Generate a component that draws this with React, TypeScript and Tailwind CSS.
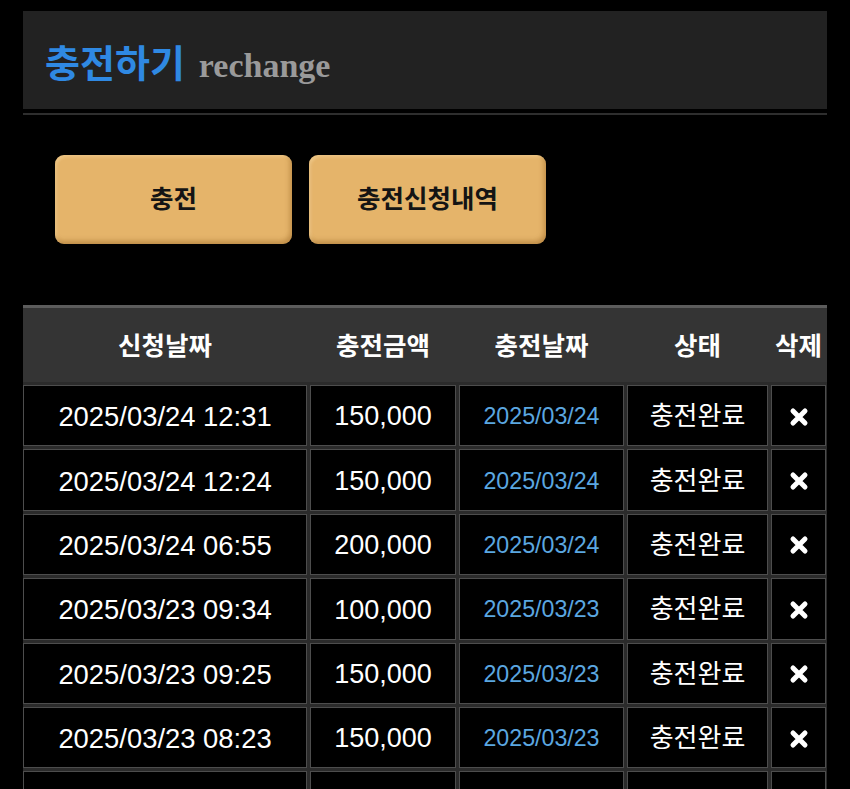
import React from 'react';

interface Recharge {
  requestedAt: string;
  amount: string;
  chargedOn: string;
  status: string;
}

const rows: Recharge[] = [
  { requestedAt: '2025/03/24 12:31', amount: '150,000', chargedOn: '2025/03/24', status: '충전완료' },
  { requestedAt: '2025/03/24 12:24', amount: '150,000', chargedOn: '2025/03/24', status: '충전완료' },
  { requestedAt: '2025/03/24 06:55', amount: '200,000', chargedOn: '2025/03/24', status: '충전완료' },
  { requestedAt: '2025/03/23 09:34', amount: '100,000', chargedOn: '2025/03/23', status: '충전완료' },
  { requestedAt: '2025/03/23 09:25', amount: '150,000', chargedOn: '2025/03/23', status: '충전완료' },
  { requestedAt: '2025/03/23 08:23', amount: '150,000', chargedOn: '2025/03/23', status: '충전완료' },
  { requestedAt: '2025/03/22 21:10', amount: '100,000', chargedOn: '2025/03/22', status: '충전완료' },
];

const font = "font-['Liberation_Sans','Noto_Sans_CJK_KR',sans-serif]";
const cols = 'grid grid-cols-[284px_146px_165px_141px_55px] gap-x-[3px]';

function DeleteIcon() {
  return (
    <svg width="20" height="20" viewBox="0 0 20 20" aria-hidden>
      <path d="M4 4 L16 16 M16 4 L4 16" stroke="#fff" strokeWidth="5" strokeLinecap="round" />
    </svg>
  );
}

function Cell({ children, className = '' }: { children: React.ReactNode; className?: string }) {
  return (
    <div className={`flex h-[61.4px] items-center justify-center border border-[#4d4d4d] bg-black pt-[2px] ${className}`}>
      {children}
    </div>
  );
}

export default function App() {
  return (
    <div className={`min-h-screen bg-black pt-[11px] ${font}`}>
      <div className="mx-[23px]">
        <div className="flex h-[98px] items-center bg-[#222222] pl-[22px] pt-[8px]">
          <h1 className="text-[38px] font-bold leading-none text-[#2f89e3]">충전하기</h1>
          <span className="ml-[14px] mt-[4px] font-['Liberation_Serif',serif] text-[34px] font-bold leading-none text-[#9a9a9a]">
            rechange
          </span>
        </div>
        <div className="mt-[4px] h-[2px] bg-[#2e2e2e]" />

        <div className="mt-[40px] flex gap-[17px] pl-[32px]">
          {['충전', '충전신청내역'].map((label) => (
            <button
              key={label}
              className="h-[89px] w-[237px] rounded-[9px] bg-[#e5b46a] text-[25.5px] font-bold text-[#141414] shadow-[inset_-2px_-3px_5px_rgba(120,70,10,0.35),inset_2px_2px_3px_rgba(255,230,180,0.4),0_2px_3px_rgba(0,0,0,0.6)]"
            >
              {label}
            </button>
          ))}
        </div>

        <div className="mt-[61px] w-[804px] bg-[#2b2b2b]">
          <div className={`${cols} h-[77px] items-center border-t-[3px] border-[#5c5c5c] bg-[#343434] pt-[3px] text-[25.5px] font-bold text-white`}>
            <div className="text-center">신청날짜</div>
            <div className="text-center">충전금액</div>
            <div className="text-center">충전날짜</div>
            <div className="text-center">상태</div>
            <div className="text-center">삭제</div>
          </div>
          <div className={`${cols} gap-y-[3px] pt-[3px]`}>
            {rows.map((r, i) => (
              <React.Fragment key={i}>
                <Cell className="text-[27.4px] text-white">{r.requestedAt}</Cell>
                <Cell className="text-[27px] text-white">{r.amount}</Cell>
                <Cell className="text-[23.2px] text-[#5ba7e0]">{r.chargedOn}</Cell>
                <Cell className="text-[26px] text-white">{r.status}</Cell>
                <Cell>
                  <DeleteIcon />
                </Cell>
              </React.Fragment>
            ))}
          </div>
        </div>
      </div>
    </div>
  );
}
